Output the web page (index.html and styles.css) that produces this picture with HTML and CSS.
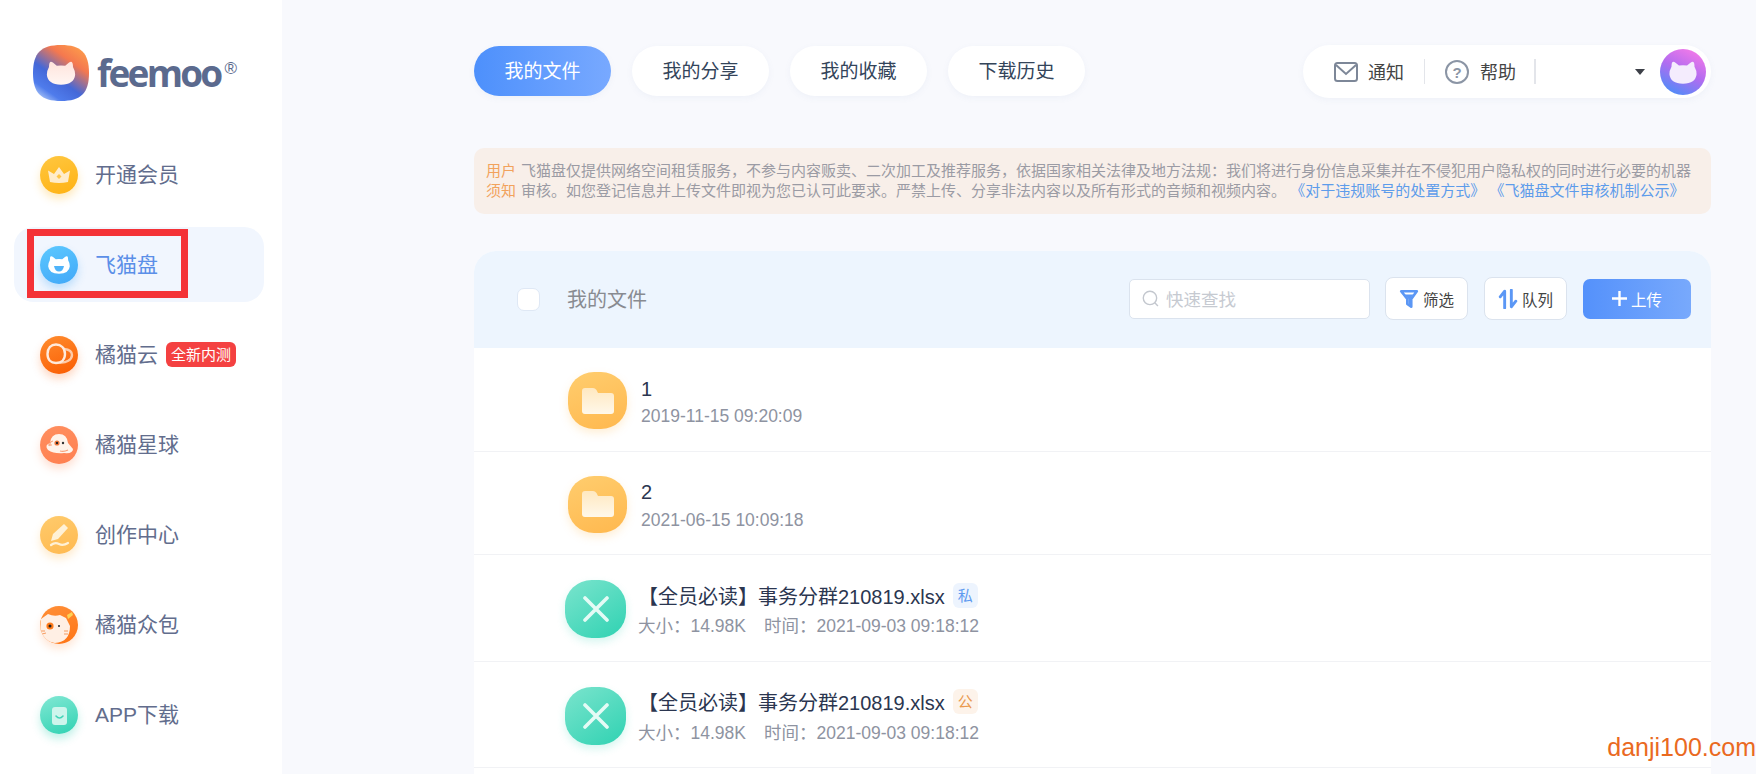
FILE: index.html
```html
<!DOCTYPE html>
<html lang="zh-CN">
<head>
<meta charset="utf-8">
<title>飞猫盘</title>
<link rel="stylesheet" href="styles.css">
</head>
<body>
<svg class="defs" width="0" height="0" aria-hidden="true">
  <defs>
    <symbol id="cat" viewBox="0 0 24 20">
      <path d="M3 .8 Q4 .3 5.500 1.500 L8.500 4 Q12 3.300 15.500 4 L18.500 1.500 Q20 .3 21 .8 Q22 1.500 22 5 Q24 8.500 23.800 11.500 Q23 19.500 12 19.800 Q1 19.500 .2 11.500 Q0 8.500 2 5 Q2 1.500 3 .8Z"/>
    </symbol>
    <linearGradient id="gLogo" x1="0.9" y1="0" x2="0.2" y2="1">
      <stop offset="0" stop-color="#ffa24a"/><stop offset=".3" stop-color="#f4784f"/><stop offset=".62" stop-color="#4468d8"/><stop offset=".85" stop-color="#4f7cec"/><stop offset="1" stop-color="#a9c4f6"/>
    </linearGradient>
    <linearGradient id="gAvatar" x1="0.8" y1="0" x2="0.3" y2="1">
      <stop offset="0" stop-color="#f77be8"/><stop offset=".5" stop-color="#b26cf0"/><stop offset="1" stop-color="#4f8cf8"/>
    </linearGradient>
    <linearGradient id="gCat" x1="0" y1="0" x2="0" y2="1">
      <stop offset="0" stop-color="#ffe4dc"/><stop offset="1" stop-color="#fff6f3"/>
    </linearGradient>
    <linearGradient id="gFolder" x1="0" y1="0" x2="0" y2="1">
      <stop offset="0" stop-color="#ffe8c0"/><stop offset="1" stop-color="#fff8ea"/>
    </linearGradient>
  </defs>
</svg>

<aside class="sidebar">
  <div class="brand">
    <svg class="brand-mark" viewBox="0 0 56 56">
      <path fill="url(#gLogo)" d="M28 0 C48 0 56 8 56 28 C56 48 48 56 28 56 C8 56 0 48 0 28 C0 8 8 0 28 0Z"/>
      <use href="#cat" x="12" y="16" width="32" height="24" fill="url(#gCat)"/>
    </svg>
    <span class="brand-name">feemoo</span><span class="brand-reg">®</span>
  </div>
  <nav class="nav">
    <a class="nav-item"><span class="nav-icon i-gold"><svg viewBox="0 0 38 38"><path fill="#ffeccb" d="M8 14.500 L14 18 L19 11 L24 18 L30 14.500 L28 26 Q19 28 10 26Z"/><path fill="#ffc64a" d="M19 18 L21.500 20.500 L19 23 L16.500 20.500Z"/></svg></span><span class="nav-label">开通会员</span></a>
    <a class="nav-item is-active"><span class="nav-icon i-blue"><svg viewBox="0 0 38 38"><use href="#cat" x="8" y="9.500" width="22" height="18.500" fill="#fff"/><path fill="#4fb4fa" d="M14 20 H24 Q23 25.500 19 25.500 Q15 25.500 14 20Z"/></svg></span><span class="nav-label">飞猫盘</span><i class="mark" aria-hidden="true"></i></a>
    <a class="nav-item"><span class="nav-icon i-orange"><svg viewBox="0 0 38 38" fill="none" stroke="#ffeadb" stroke-width="2.400"><path d="M7.500 18 C7.500 12 11 8.500 16 8.500 C21 8.500 25 12 25 18 C25 24 21 27 16 27 C11 27 7.500 24 7.500 18Z"/><path stroke-opacity=".75" d="M24 13 C29 13.500 32 15.500 32 19 C32 24 26 27 20 26.500"/></svg></span><span class="nav-label">橘猫云</span><b class="badge">全新内测</b></a>
    <a class="nav-item"><span class="nav-icon i-coral"><svg viewBox="0 0 38 38"><path fill="#fff3ea" d="M10 17 Q11 8 19 8 Q27 8 28 17 L33 23 Q33 28 24 27 Q14 28 8 24 Q4 19 10 17Z"/><path fill="none" stroke="#f7a27a" stroke-width="1.200" d="M13 15 Q9 16 10 20 M8 19 H12 M28 24 Q24 26 20 25"/><circle cx="17" cy="17" r="2.600" fill="#f37b3e"/><circle cx="17" cy="17" r="1.200" fill="#222"/><circle cx="23" cy="17" r="1.200" fill="#333"/></svg></span><span class="nav-label">橘猫星球</span></a>
    <a class="nav-item"><span class="nav-icon i-yellow"><svg viewBox="0 0 38 38"><path fill="#fff1d6" d="M24 8 L28 12 L18 23 L11 25 L13 18Z"/><path fill="none" stroke="#fff1d6" stroke-width="2.200" stroke-linecap="round" d="M11 29 Q15 26 19 28 T28 27"/></svg></span><span class="nav-label">创作中心</span></a>
    <a class="nav-item"><span class="nav-icon i-cat"><svg viewBox="0 0 38 38"><path fill="#ffefe4" d="M1 13 L8 8 Q14 11 20 9 L26 12 L30 20 Q30 36 15 37 Q3 36 0 24Z"/><circle cx="10" cy="20" r="3.600" fill="#ff7a1a"/><circle cx="10" cy="20" r="1.500" fill="#222"/><circle cx="19" cy="20" r="1.100" fill="#333"/><path fill="#ffd254" d="M27 9 L32 6 L33 9 L28 13Z"/><path stroke="#f59b60" stroke-width="1" d="M1 25 L5 25 M2 28 L6 27 M24 25 L28 25 M24 28 L28 28"/></svg></span><span class="nav-label">橘猫众包</span></a>
    <a class="nav-item"><span class="nav-icon i-teal"><svg viewBox="0 0 38 38"><rect x="12" y="11" width="15" height="18" rx="3" fill="#cdf5ec"/><path fill="none" stroke="#43d4b8" stroke-width="1.600" stroke-linecap="round" d="M16 20 Q19.500 24 23 20"/></svg></span><span class="nav-label">APP下载</span></a>
  </nav>
</aside>

<main class="main">
  <header class="topbar">
    <div class="tabs">
      <a class="tab is-current">我的文件</a>
      <a class="tab">我的分享</a>
      <a class="tab">我的收藏</a>
      <a class="tab">下载历史</a>
    </div>
    <div class="userbar">
      <svg class="ub-mail" viewBox="0 0 24 20" fill="none" stroke="#7d8798" stroke-width="2"><rect x="1" y="1" width="22" height="18" rx="2.500"/><path d="M2 3 L12 12 L22 3"/></svg>
      <span class="ub-label">通知</span>
      <i class="ub-sep"></i>
      <svg class="ub-help" viewBox="0 0 24 24" fill="none" stroke="#8b95a5" stroke-width="2"><circle cx="12" cy="12" r="11"/><text x="12" y="17.500" text-anchor="middle" class="ub-q">?</text></svg>
      <span class="ub-label">帮助</span>
      <i class="ub-sep ub-sep-wide"></i>
      <i class="ub-caret"></i>
      <svg class="ub-avatar" viewBox="0 0 46 46"><circle cx="23" cy="23" r="23" fill="url(#gAvatar)"/><use href="#cat" x="9" y="12" width="28" height="23" fill="#f4ecfd"/></svg>
    </div>
  </header>

  <section class="notice">
    <div class="notice-label"><span>用户</span><span>须知</span></div>
    <div class="notice-text">
      <p>飞猫盘仅提供网络空间租赁服务，不参与内容贩卖、二次加工及推荐服务，依据国家相关法律及地方法规：我们将进行身份信息采集并在不侵犯用户隐私权的同时进行必要的机器</p>
      <p>审核。如您登记信息并上传文件即视为您已认可此要求。严禁上传、分享非法内容以及所有形式的音频和视频内容。 <a>《对于违规账号的处置方式》</a> <a>《飞猫盘文件审核机制公示》</a></p>
    </div>
  </section>

  <section class="card">
    <div class="card-head">
      <span class="check"></span>
      <span class="card-title">我的文件</span>
      <div class="search">
        <svg class="search-icon" viewBox="0 0 16 16" fill="none" stroke="#c3c7ce" stroke-width="1.300"><circle cx="7.500" cy="7.500" r="6.300"/><path d="M12 12 L15 15"/></svg>
        <span>快速查找</span>
      </div>
      <button class="btn"><svg class="btn-icon" viewBox="0 0 18 18"><path fill="none" stroke="#5b97f5" stroke-width="2.400" stroke-linejoin="round" d="M2 2 H16 L11 9 V16 L7.500 13.500 V9Z"/><path fill="#5b97f5" d="M5 5 H13 L10 9 V14 L8.500 13 V9Z"/></svg>筛选</button>
      <button class="btn"><svg class="btn-icon" viewBox="0 0 18 18" fill="none" stroke="#5b97f5" stroke-width="2.600" stroke-linecap="round" stroke-linejoin="round"><path d="M6 17 V2 L2 7"/><path d="M12 1 V16 L16 11"/></svg>队列</button>
      <button class="btn btn-primary"><svg class="btn-plus" viewBox="0 0 15 15" stroke="#fff" stroke-width="2.400"><path d="M0 7.500 H15 M7.500 0 V15"/></svg>上传</button>
    </div>

    <div class="row row-folder">
      <span class="ficon ficon-folder"><svg viewBox="0 0 32 26"><path fill="url(#gFolder)" d="M3 0 H11 Q13 0 14.500 2 L16 5 H29 Q32 5 32 8 V23 Q32 26 29 26 H3 Q0 26 0 23 V3 Q0 0 3 0Z"/></svg></span>
      <div class="finfo"><div class="fname">1</div><div class="fmeta">2019-11-15 09:20:09</div></div>
    </div>
    <div class="row row-folder">
      <span class="ficon ficon-folder"><svg viewBox="0 0 32 26"><path fill="url(#gFolder)" d="M3 0 H11 Q13 0 14.500 2 L16 5 H29 Q32 5 32 8 V23 Q32 26 29 26 H3 Q0 26 0 23 V3 Q0 0 3 0Z"/></svg></span>
      <div class="finfo"><div class="fname">2</div><div class="fmeta">2021-06-15 10:09:18</div></div>
    </div>
    <div class="row row-file">
      <span class="ficon ficon-x"><svg viewBox="0 0 26 26" stroke="#e4fbf5" stroke-width="3.600" stroke-linecap="round"><path d="M2 2 L24 24 M24 2 L2 24"/></svg></span>
      <div class="finfo"><div class="fname">【全员必读】事务分群210819.xlsx<em class="tag tag-private">私</em></div><div class="fmeta"><span class="fsize">大小：14.98K</span>时间：2021-09-03 09:18:12</div></div>
    </div>
    <div class="row row-file">
      <span class="ficon ficon-x"><svg viewBox="0 0 26 26" stroke="#e4fbf5" stroke-width="3.600" stroke-linecap="round"><path d="M2 2 L24 24 M24 2 L2 24"/></svg></span>
      <div class="finfo"><div class="fname">【全员必读】事务分群210819.xlsx<em class="tag tag-public">公</em></div><div class="fmeta"><span class="fsize">大小：14.98K</span>时间：2021-09-03 09:18:12</div></div>
    </div>
    <div class="row row-rest"></div>
  </section>
</main>

<div class="watermark">danji100.com</div>
</body>
</html>
```
FILE: styles.css
```css
* { box-sizing: border-box; }
html, body { margin: 0; height: 774px; overflow: hidden; }
body {
  display: flex;
  background: #f8f9fd;
  font-family: "Liberation Sans", "Noto Sans CJK SC", sans-serif;
  color: #2b3650;
}
p { margin: 0; }
.defs { position: absolute; }

/* sidebar */
.sidebar { width: 282px; flex: none; background: #fff; height: 774px; }
.brand { height: 137px; padding: 45px 0 0 33px; display: flex; align-items: flex-start; }
.brand-mark { width: 56px; height: 56px; flex: none; }
.brand-name {
  font-family: "Open Sans", sans-serif;
  font-weight: 700;
  font-size: 37px;
  letter-spacing: -2.800px;
  line-height: 40px;
  margin: 8px 0 0 8px;
  color: #5b6a8e;
}
.brand-reg { font-size: 17px; line-height: 16px; margin: 16px 0 0 4px; color: #5b6a8e; }
.nav { display: flex; flex-direction: column; gap: 15px; margin: 0 18px 0 14px; }
.nav-item {
  position: relative;
  height: 75px;
  display: flex;
  align-items: center;
  padding-left: 26px;
  border-radius: 20px;
  font-size: 21px;
  color: #626d8d;
}
.nav-item.is-active { background: #f1f6fe; color: #5b8fe8; }
.nav-label { margin-bottom: 4px; }
.nav-icon { width: 38px; height: 38px; border-radius: 50%; margin-right: 17px; flex: none; overflow: hidden; }
.nav-icon svg { display: block; width: 38px; height: 38px; }
.i-gold { background: linear-gradient(160deg, #ffc740, #ffb213); box-shadow: 0 5px 9px rgba(255, 185, 40, .3); }
.i-blue { background: linear-gradient(160deg, #5cc8ff, #41a8f8); box-shadow: 0 5px 9px rgba(70, 170, 250, .3); }
.i-orange { background: linear-gradient(160deg, #ff8c2e, #fa5c02); box-shadow: 0 5px 9px rgba(250, 100, 20, .25); }
.i-coral { background: linear-gradient(160deg, #ff8f5f, #ff7f50); box-shadow: 0 5px 9px rgba(255, 130, 80, .25); }
.i-yellow { background: linear-gradient(160deg, #ffcb6c, #ffb950); box-shadow: 0 5px 9px rgba(255, 190, 90, .3); }
.i-cat { background: linear-gradient(160deg, #ff8f38, #ff7414); box-shadow: 0 5px 9px rgba(255, 130, 50, .2); }
.i-teal { background: linear-gradient(160deg, #82e8d4, #2fd2b2); box-shadow: 0 5px 9px rgba(50, 210, 180, .3); }
.badge {
  margin-left: 8px;
  width: 70px;
  height: 25px;
  line-height: 25px;
  text-align: center;
  background: #f44141;
  border-radius: 6px;
  color: #fff;
  font-size: 15px;
  font-weight: 400;
}
.mark {
  position: absolute;
  left: 13px;
  top: 2px;
  width: 161px;
  height: 69px;
  border: 7px solid #f43237;
}

/* main */
.main { flex: 1; min-width: 0; padding: 45px 45px 0 192px; }
.topbar { display: flex; justify-content: space-between; align-items: flex-start; height: 53px; }
.tabs { display: flex; gap: 21px; margin-top: 1px; }
.tab {
  width: 137px;
  height: 50px;
  line-height: 51px;
  text-align: center;
  border-radius: 25px;
  background: #fff;
  font-size: 19px;
  color: #33445a;
  box-shadow: 0 2px 6px rgba(120, 140, 190, .07);
}
.tab.is-current { background: linear-gradient(90deg, #4d90fc, #78a9ff); color: #fff; }
.userbar {
  width: 408px;
  height: 53px;
  display: flex;
  align-items: center;
  padding-left: 31px;
  border-radius: 27px;
  background: #fff;
  box-shadow: 0 2px 6px rgba(120, 140, 190, .07);
  font-size: 18px;
  color: #444;
}
.ub-mail { width: 24px; height: 20px; flex: none; margin-right: 10px; }
.ub-label { width: 36px; flex: none; margin-bottom: 2px; }
.ub-sep { width: 1px; height: 25px; background: #e3e5ea; margin: 0 20px; flex: none; }
.ub-sep-wide { width: 2px; margin-left: 18px; margin-right: 0; }
.ub-help { width: 24px; height: 24px; flex: none; margin-right: 11px; }
.ub-q { font-size: 15px; fill: #8b95a5; stroke: none; font-weight: 700; }
.ub-caret {
  width: 0;
  height: 0;
  margin-left: 99px;
  border-left: 5px solid transparent;
  border-right: 5px solid transparent;
  border-top: 6px solid #3d4048;
  flex: none;
}
.ub-avatar { width: 46px; height: 46px; margin-left: 15px; flex: none; }

.notice {
  display: flex;
  gap: 5px;
  height: 66px;
  margin-top: 50px;
  padding: 13px 0 0 12px;
  background: #f8efe9;
  border-radius: 10px;
  font-size: 15px;
  line-height: 20px;
  color: #9b9ba4;
  white-space: nowrap;
}
.notice-label { display: flex; flex-direction: column; color: #f2a25c; }
.notice-text a { color: #5d9ceb; }

.card { margin-top: 37px; background: #fff; border-radius: 22px 22px 0 0; overflow: hidden; }
.card-head {
  height: 97px;
  display: flex;
  align-items: center;
  padding: 0 20px 2px 43px;
  background: #edf5fe;
}
.check { width: 23px; height: 23px; margin-top: 2px; background: #fff; border: 1px solid #dfe8f5; border-radius: 7px; flex: none; }
.card-title { font-size: 20px; color: #888b91; margin-left: 27px; }
.search {
  width: 241px;
  height: 40px;
  margin: 0 -1px 0 auto;
  display: flex;
  align-items: center;
  gap: 7px;
  padding-left: 12px;
  background: #fff;
  border: 1px solid #dbe3ee;
  border-radius: 5px;
  color: #c6cad1;
  font-size: 17.500px;
}
.search-icon { width: 17px; height: 17px; flex: none; }
.btn {
  width: 83px;
  height: 43px;
  margin-left: 16px;
  display: flex;
  align-items: center;
  justify-content: center;
  gap: 4px;
  padding: 0;
  background: #fff;
  border: 1px solid #dbe3ee;
  border-radius: 8px;
  font: inherit;
  font-size: 15.500px;
  color: #444;
}
.btn-icon { width: 20px; height: 20px; flex: none; }
.btn-primary {
  width: 108px;
  height: 40px;
  border: 0;
  border-radius: 7px;
  background: linear-gradient(90deg, #5491fb, #78a9fc);
  color: #fff;
}
.btn-plus { width: 15px; height: 15px; flex: none; }

.row { display: flex; align-items: flex-start; border-bottom: 1px solid #f1f2f5; }
.row-folder { height: 103.500px; padding: 24px 0 0 94px; gap: 14px; }
.row-file { height: 106.500px; padding: 25px 0 0 91px; gap: 12px; }
.row-rest { height: 40px; border: 0; }
.ficon {
  display: flex;
  align-items: center;
  justify-content: center;
  flex: none;
  border-radius: 44%;
}
.ficon-folder {
  width: 59px;
  height: 57px;
  background: linear-gradient(160deg, #ffcd6e, #ffb84e);
  box-shadow: 0 4px 8px rgba(255, 190, 90, .25);
}
.ficon-folder svg { width: 32px; height: 26px; }
.ficon-x {
  width: 61px;
  height: 58px;
  background: linear-gradient(145deg, #7be4cd, #2fd2b2);
  box-shadow: 0 4px 8px rgba(50, 210, 180, .2);
}
.ficon-x svg { width: 26px; height: 26px; }
.finfo { margin-top: 0; }
.fname { display: flex; align-items: center; height: 30px; font-size: 20px; color: #2b3650; }
.fmeta { height: 30px; line-height: 30px; margin-top: 1px; font-size: 17.500px; color: #8e93a1; }
.row-folder .finfo { margin-top: 2px; }
.row-folder .fmeta { margin-top: -3px; }
.fsize { margin-right: 18px; }
.tag {
  width: 25px;
  height: 25px;
  line-height: 25px;
  margin-left: 8px;
  text-align: center;
  border-radius: 6px;
  font-style: normal;
  font-size: 15px;
}
.tag-private { background: #edf4fe; color: #5f9bf0; }
.tag-public { background: #fdf3ea; color: #ea9a50; }

.watermark {
  position: absolute;
  right: 0;
  top: 732px;
  font-size: 25px;
  line-height: 30px;
  color: #ea6a1f;
}
```
